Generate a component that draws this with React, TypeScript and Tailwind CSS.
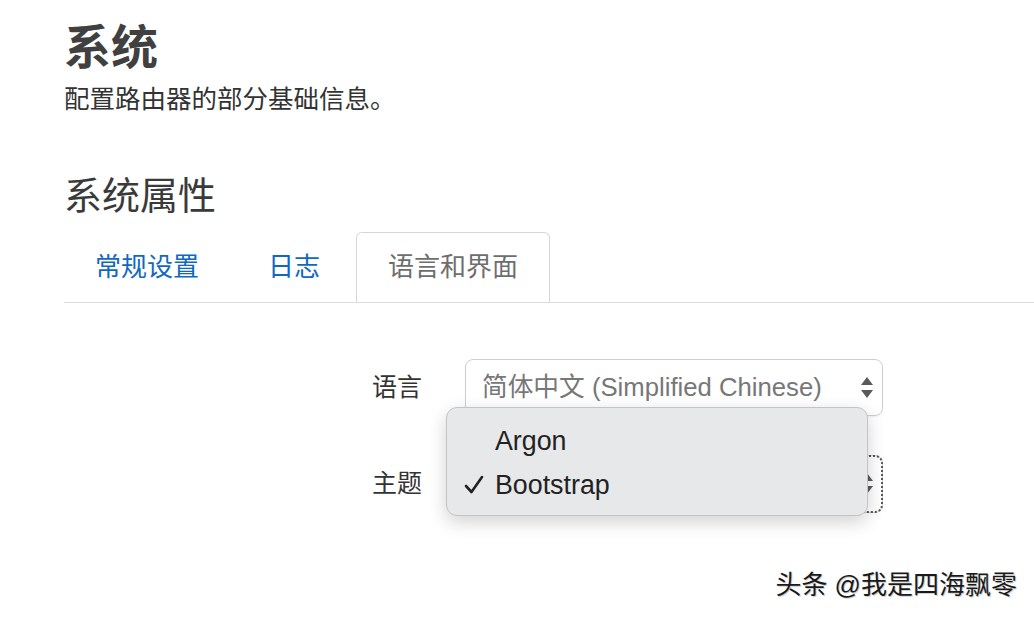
import React from "react";

const font = "font-['Liberation_Sans','Noto_Sans_CJK_SC',sans-serif]";

function Arrows() {
  return (
    <svg width="12" height="22" viewBox="0 0 12 22" className="shrink-0">
      <path d="M6 0 L12 8 L0 8 Z" fill="#5a5a5a" />
      <path d="M0 13 L12 13 L6 21 Z" fill="#5a5a5a" />
    </svg>
  );
}

function Check() {
  return (
    <svg width="20" height="20" viewBox="0 0 20 20" className="shrink-0">
      <path d="M2 11 L7.5 17 L18 2" fill="none" stroke="#222" strokeWidth="2.6" strokeLinecap="round" strokeLinejoin="round" />
    </svg>
  );
}

export default function App() {
  return (
    <div className={`${font} relative w-[1034px] h-[618px] overflow-hidden bg-white pl-[64px] pt-[20px] text-[#404040]`}>
      {/* Page title */}
      <h1 className="text-[47px] leading-[56px] font-bold">系统</h1>
      <p className="mt-[6px] text-[25.5px] leading-[34px] text-[#333]">配置路由器的部分基础信息。</p>

      <h2 className="mt-[56px] text-[38px] leading-[48px] text-[#3a3a3a]">系统属性</h2>

      {/* Tabs */}
      <div className="mt-[12px] flex border-b border-[#dcdcdc]">
        <div className="-ml-[1px] h-[70px] px-[31px] flex items-center text-[26px] text-[#1168c2] border border-transparent">常规设置</div>
        <div className="ml-[5px] h-[70px] px-[31px] flex items-center text-[26px] text-[#1168c2] border border-transparent">日志</div>
        <div className="ml-[4px] -mb-px h-[70px] px-[31px] flex items-center text-[26px] text-[#6e6e6e] bg-white border border-b-0 border-[#d6d6d6] rounded-t-[6px]">语言和界面</div>
      </div>

      {/* Form */}
      <div className="mt-[56px] grid grid-cols-[358px_418px] gap-x-[43px] gap-y-[39px] items-center">
        <div className="text-right text-[25px] text-[#333]">语言</div>
        <div className="h-[57px] rounded-[8px] border border-[#cfcfcf] shadow-[0_1px_2px_rgba(0,0,0,0.06)] flex items-center justify-between pl-[16px] pr-[9px]">
          <span className="text-[25.7px] text-[#777]">简体中文 (Simplified Chinese)</span>
          <Arrows />
        </div>

        <div className="text-right text-[25px] text-[#333]">主题</div>
        <div className="relative">
          <div className="h-[58px] rounded-[8px] border border-[#cfcfcf] outline-dotted outline-2 outline-offset-[-2px] outline-[#555] flex items-center justify-end pl-[16px] pr-[9px]">
            <Arrows />
          </div>

          {/* Open dropdown menu */}
          <div className="absolute left-[-19px] top-[-48px] w-[422px] h-[109px] rounded-[11px] border border-[#c4c4c4] bg-[#e7e8e9] shadow-[0_6px_18px_rgba(0,0,0,0.18)] pt-[11px] text-[26.8px] text-[#222]">
            <div className="h-[44px] flex items-center pl-[48px]">Argon</div>
            <div className="h-[44px] flex items-center pl-[17px]">
              <span className="w-[31px] flex items-center"><Check /></span>
              <span>Bootstrap</span>
            </div>
          </div>
        </div>
      </div>

      {/* Watermark */}
      <div className="mt-[56px] pr-[17px] text-right text-[26px] leading-[32px] text-[#1a1a1a] [text-shadow:1px_1px_0_#d0d0d0]">
        头条 @我是四海飘零
      </div>
    </div>
  );
}
